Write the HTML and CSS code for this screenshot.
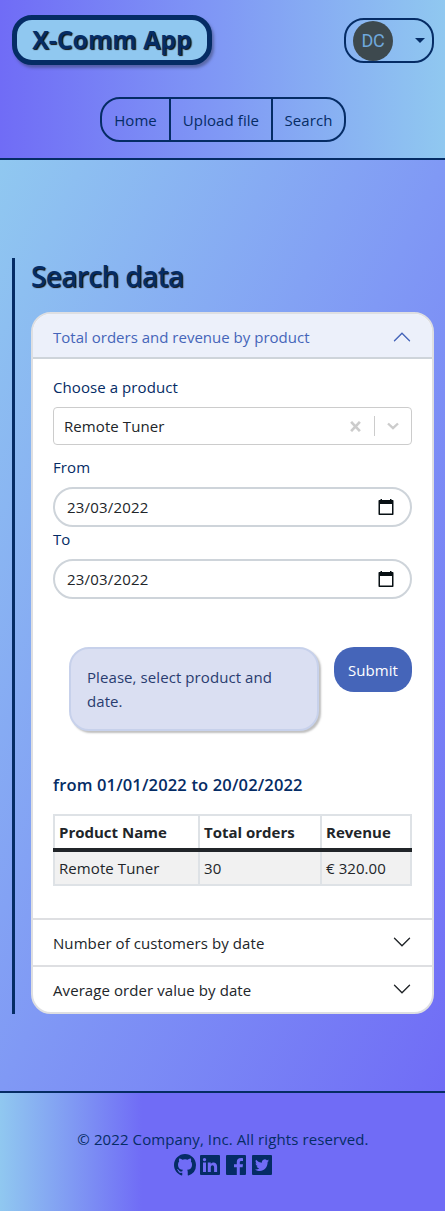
FILE: index.html
```html
<!DOCTYPE html>
<html lang="en">
<head>
<meta charset="utf-8">
<title>X-Comm App</title>
<link rel="stylesheet" href="styles.css">
</head>
<body>
<header class="header">
  <div class="topbar">
    <a class="brand"><span>X-Comm App</span></a>
    <button class="user"><span class="avatar">DC</span><span class="caret"></span></button>
  </div>
  <nav class="nav"><a class="home">Home</a><a class="upload">Upload file</a><a class="search">Search</a></nav>
</header>
<main class="main">
  <section class="panel">
    <h1 class="title">Search data</h1>
    <div class="accordion">
      <div class="item-head open"><span>Total orders and revenue by product</span>
        <svg class="chev" viewBox="0 0 16 16"><path d="M2 11l6-6 6 6"/></svg></div>
      <div class="item-body">
        <div class="label">Choose a product</div>
        <div class="select"><span>Remote Tuner</span>
          <svg class="clear" viewBox="0 0 10 10"><path d="M1 .8l8 8.4M9 .8L1 9.2"/></svg>
          <i class="sep"></i>
          <svg class="down" viewBox="0 0 12 8"><path d="M1 1.5l5 4.7 5-4.7"/></svg>
        </div>
        <div class="label from">From</div>
        <div class="date"><span>23/03/2022</span><svg class="cal" viewBox="0 0 16 18"><path fill-rule="evenodd" d="M2.500 1h1.500v1h8V1h1.500v1h1.200q.8 0 .8.8V16.200q0 .8-.8.8H1.300q-.8 0-.8-.8V2.800q0-.8.8-.8h1.200zM2 6v9.500h12V6z"/></svg></div>
        <div class="label">To</div>
        <div class="date"><span>23/03/2022</span><svg class="cal" viewBox="0 0 16 18"><path fill-rule="evenodd" d="M2.500 1h1.500v1h8V1h1.500v1h1.200q.8 0 .8.8V16.200q0 .8-.8.8H1.300q-.8 0-.8-.8V2.800q0-.8.8-.8h1.200zM2 6v9.500h12V6z"/></svg></div>
        <div class="actions">
          <div class="alert">Please, select product and<br>date.</div>
          <button class="submit">Submit</button>
        </div>
        <h2 class="range">from 01/01/2022 to 20/02/2022</h2>
        <table class="table">
          <colgroup><col class="c1"><col class="c2"><col class="c3"></colgroup>
          <thead><tr><th>Product Name</th><th>Total orders</th><th>Revenue</th></tr></thead>
          <tbody><tr><td>Remote Tuner</td><td>30</td><td>€ 320.00</td></tr></tbody>
        </table>
      </div>
      <div class="item-head"><span>Number of customers by date</span>
        <svg class="chev" viewBox="0 0 16 16"><path d="M2 5l6 6 6-6"/></svg></div>
      <div class="item-head"><span>Average order value by date</span>
        <svg class="chev" viewBox="0 0 16 16"><path d="M2 5l6 6 6-6"/></svg></div>
    </div>
  </section>
</main>
<footer class="footer">
  <p class="copy">© 2022 Company, Inc. All rights reserved.</p>
  <div class="social">
    <svg class="gh" viewBox="0 0 16 16"><path d="M8 0C3.580 0 0 3.580 0 8c0 3.540 2.290 6.530 5.470 7.590.4.070.55-.17.55-.38 0-.19-.01-.82-.01-1.490-2.010.37-2.530-.49-2.690-.94-.09-.23-.48-.94-.82-1.130-.28-.15-.68-.52-.01-.53.63-.01 1.080.58 1.230.82.72 1.210 1.870.87 2.330.66.070-.52.28-.87.51-1.070-1.780-.2-3.640-.89-3.640-3.950 0-.87.31-1.590.82-2.150-.08-.2-.36-1.020.08-2.120 0 0 .67-.21 2.200.82a7.600 7.600 0 0 1 4 0c1.530-1.040 2.200-.82 2.200-.82.44 1.100.16 1.920.08 2.120.51.56.82 1.270.82 2.150 0 3.070-1.870 3.750-3.650 3.950.29.25.54.73.54 1.480 0 1.070-.01 1.930-.01 2.200 0 .21.15.46.55.38A8 8 0 0 0 16 8c0-4.420-3.580-8-8-8z"/></svg>
    <svg class="sq" viewBox="0 0 20 20"><path fill-rule="evenodd" d="M1 0h18q1 0 1 1v18q0 1-1 1H1q-1 0-1-1V1q0-1 1-1zM3 7.600V17h3V7.600zM4.500 2.900a1.700 1.700 0 1 0 0 3.400 1.700 1.700 0 0 0 0-3.400zM7.800 7.600V17h3v-4.700c0-2.900 3.300-2.900 3.300 0V17h3v-5.400c0-4.800-4.800-5.200-6.300-2.700V7.600z"/></svg>
    <svg class="sq" viewBox="0 0 20 20"><path fill-rule="evenodd" d="M1 0h18q1 0 1 1v18q0 1-1 1H1q-1 0-1-1V1q0-1 1-1zM10.800 20h3v-7.700h2.800l.4-3h-3.200V7.400c0-1 .4-1.500 1.600-1.500H17V3.200c-4-.6-6.200.6-6.200 3.800v2.300H8v3h2.800z"/></svg>
    <svg class="sq" viewBox="0 0 20 20"><path fill-rule="evenodd" d="M1 0h18q1 0 1 1v18q0 1-1 1H1q-1 0-1-1V1q0-1 1-1zM17 5.500q-.8.400-1.600.5.800-.5 1.200-1.500-.8.500-1.800.7a2.900 2.900 0 0 0-4.900 2.600Q6.300 7.600 4 4.800c-.8 1.300-.4 2.900.9 3.800q-.7 0-1.300-.3c0 1.300.9 2.500 2.300 2.800q-.6.200-1.300.1c.4 1.100 1.400 2 2.700 2Q5.600 14.600 3 14.400c6.300 4 12.800-.4 12.600-7.400Q16.500 6.400 17 5.500z"/></svg>
  </div>
</footer>
</body>
</html>
```
FILE: styles.css
```css
* { box-sizing: border-box; }
body {
  margin: 0;
  font: 15px/24px "Open Sans", "Noto Sans", sans-serif;
  letter-spacing: 0.08px;
  color: #212529;
}
button { font: inherit; letter-spacing: inherit; }
span, th, td { white-space: nowrap; }
.header {
  height: 160px;
  padding: 15px 11px 0 12px;
  border-bottom: 2px solid #052c65;
  background: linear-gradient(90deg, #706cf6, #8099f5 50%, #90c8f0);
}
.topbar { display: flex; justify-content: space-between; }
.brand {
  width: 200px;
  height: 50px;
  border: 5px solid #052c65;
  border-radius: 20px;
  background: #90c8f0;
  box-shadow: 2px 3px 3px rgba(60, 70, 110, .55);
  color: #052c65;
  font-size: 25px;
  font-weight: 700;
  letter-spacing: -0.1px;
  line-height: 38px;
  text-align: center;
  text-shadow: 1px 1px 1px #111;
}
.user {
  width: 90px;
  height: 45px;
  margin-top: 3px;
  padding: 0 7px;
  display: flex;
  align-items: center;
  justify-content: space-between;
  border: 2px solid #052c65;
  border-radius: 20px;
  background: transparent;
}
.avatar {
  width: 40px;
  height: 40px;
  border-radius: 50%;
  background: #3d494e;
  color: #6fa8dc;
  font: 18px/40px Roboto, sans-serif;
  letter-spacing: -0.3px;
}
.caret {
  border: 5px solid transparent;
  border-top-color: #052c65;
  border-bottom: 0;
}
.nav {
  width: 246px;
  height: 45px;
  margin: 32px auto 0 88px;
  display: grid;
  grid-template-columns: 67px 102px 1fr;
  border: 2px solid #052c65;
  border-radius: 20px;
  color: #052c65;
  line-height: 42px;
  text-align: center;
}
.nav a + a { border-left: 2px solid #052c65; }
.main {
  height: 931px;
  padding: 98px 11px 0 12px;
  background: linear-gradient(to bottom right, #90c8f0, #8099f5 50%, #706cf6);
}
.panel {
  height: 756px;
  padding-left: 16px;
  border-left: 3px solid #052c65;
}
.title {
  margin: 0;
  height: 54px;
  color: #052c65;
  font-size: 28px;
  font-weight: 600;
  letter-spacing: -0.65px;
  line-height: 37px;
  text-shadow: 1px 1px 1px #111;
}
.accordion {
  height: 702px;
  border: 2px solid #dedfe2;
  border-radius: 20px;
  background: #fff;
  overflow: hidden;
}
.item-head {
  height: 47px;
  padding: 0 20px;
  display: flex;
  align-items: center;
  justify-content: space-between;
  border-top: 2px solid #dedfe2;
}
.item-head.open {
  height: 45px;
  padding-top: 3px;
  border-top: 0;
  border-bottom: 2px solid #ced4da;
  background: #ecf0fa;
  color: #4565b9;
  letter-spacing: 0.01px;
}
.chev {
  width: 20px;
  height: 20px;
  fill: none;
  stroke: #212529;
  stroke-width: 1.1;
  stroke-linecap: round;
  margin-bottom: 1px;
}
.open .chev { stroke: #4565b9; }
.item-body { height: 559px; padding: 16px 20px 0; }
.label { height: 32px; color: #052c65; }
.select {
  height: 38px;
  display: flex;
  align-items: center;
  padding: 0 12px 0 10px;
  border: 1px solid #ccc;
  border-radius: 4px;
}
.clear {
  width: 11px;
  height: 11px;
  margin-left: auto;
  fill: none;
  stroke: #ccc;
  stroke-width: 2.4;
}
.sep { width: 1px; height: 20px; margin: 0 12px 0 13px; background: #ccc; }
.down {
  width: 12px;
  height: 8px;
  fill: none;
  stroke: #ccc;
  stroke-width: 2.4;
}
.from { margin-top: 10px; }
.date {
  height: 40px;
  padding: 0 16.5px 0 12px;
  display: flex;
  align-items: center;
  justify-content: space-between;
  border: 2px solid #ced4da;
  border-radius: 20px;
  letter-spacing: 0.2px;
}
.cal { width: 16px; height: 18px; fill: #081014; margin-top: -1px; }
.actions {
  display: flex;
  justify-content: space-between;
  align-items: flex-start;
  margin: 48px 0 0 16px;
}
.alert {
  width: 250px;
  height: 84px;
  padding: 16px;
  border: 2px solid #c7d1eb;
  border-radius: 20px;
  background: #dadff2;
  box-shadow: 2px 2px 2px rgba(0, 0, 0, .25);
  color: #293c70;
  white-space: nowrap;
}
.submit {
  width: 78px;
  height: 45px;
  padding: 0;
  border: 0;
  border-radius: 20px;
  background: #4565b9;
  color: #fff;
}
.range {
  margin: 42px 0 17px;
  color: #052c65;
  font-size: 16.5px;
  font-weight: 600;
  letter-spacing: 0.16px;
  line-height: 24px;
}
.table {
  width: 359px;
  table-layout: fixed;
  border-collapse: collapse;
}
.c1 { width: 145px; }
.c2 { width: 122px; }
.table th, .table td {
  height: 35px;
  padding: 0 4px;
  border: 2px solid #dee2e6;
  text-align: left;
}
.table th { letter-spacing: 0; }
.table thead { border-bottom: 4px solid #212529; }
.table thead th { border-bottom: 4px solid #212529; }
.table td { background: #f1f1f1; }
.footer {
  height: 120px;
  padding: 34px 0 0;
  border-top: 2px solid #052c65;
  background: linear-gradient(90deg, #90c8f0, #706cf6 142px);
  color: #052c65;
}
.copy { margin: 0 0 0 1px; text-align: center; letter-spacing: 0.1px; }
.social {
  display: flex;
  justify-content: center;
  align-items: center;
  gap: 6px;
  margin: 3px 0 0;
}
.gh { width: 22px; height: 22px; margin-right: -2px; }
.sq { width: 20px; height: 20px; }
.social svg { fill: #052c65; }
```
